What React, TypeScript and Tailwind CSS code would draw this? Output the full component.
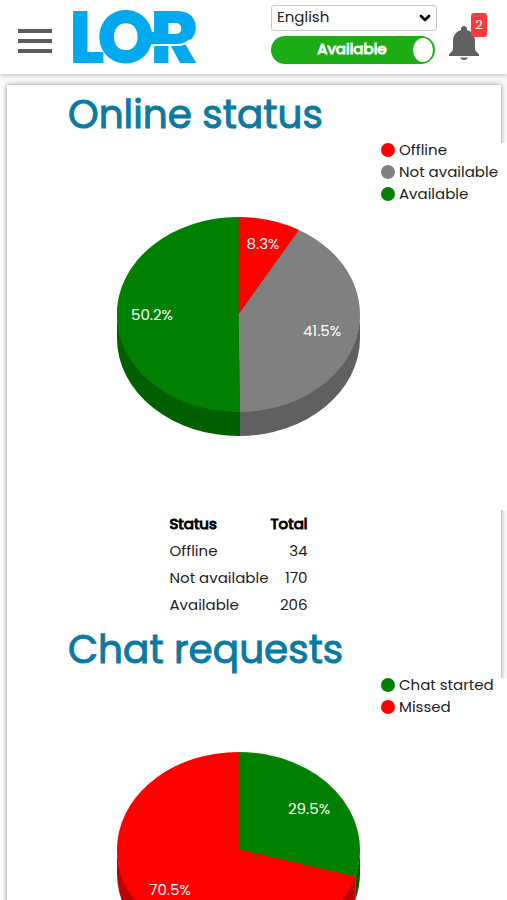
import React, { useState } from 'react';
import { ChevronDown } from 'lucide-react';

interface StatItem {
  label: string;
  share: number;
  fill: string;
  side: string;
  dot: string;
  labelX: number;
  labelY: number;
  total?: number;
}

const ONLINE_STATUS: StatItem[] = [
  { label: 'Offline', share: 8.3, fill: '#ff0000', side: '#bf0000', dot: 'bg-[#ff0000]', labelX: 146, labelY: 32, total: 34 },
  { label: 'Not available', share: 41.5, fill: '#808080', side: '#606060', dot: 'bg-[#808080]', labelX: 205, labelY: 119, total: 170 },
  { label: 'Available', share: 50.2, fill: '#008000', side: '#006000', dot: 'bg-[#008000]', labelX: 35, labelY: 103, total: 206 },
];

const CHAT_REQUESTS: StatItem[] = [
  { label: 'Chat started', share: 29.5, fill: '#008000', side: '#006000', dot: 'bg-[#008000]', labelX: 192, labelY: 62 },
  { label: 'Missed', share: 70.5, fill: '#ff0000', side: '#bf0000', dot: 'bg-[#ff0000]', labelX: 53, labelY: 143 },
];

const CX = 121.5;
const CY = 97.5;
const DEPTH = 24;

// share of the circle, clockwise from the top, to a point on the ellipse
const point = (share: number, dy = 0) => {
  const angle = (share / 100) * Math.PI * 2;
  return `${(CX + CX * Math.sin(angle)).toFixed(2)} ${(CY - CY * Math.cos(angle) + dy).toFixed(2)}`;
};

const Pie3D: React.FC<{ items: StatItem[]; title: string }> = ({ items, title }) => {
  let sum = 0;
  const slices = items.map(item => {
    const start = sum;
    sum += item.share;
    return { ...item, start, end: sum };
  });

  return (
    <svg viewBox="0 0 243 219" className="h-[219px] w-[243px]" role="img" aria-label={title}>
      {slices.map(s => {
        // only the front half of the rim can be seen
        const from = Math.max(s.start, 25);
        const to = Math.min(s.end, 75);
        if (from >= to) return null;
        return (
          <path
            key={s.label}
            fill={s.side}
            d={`M${point(from, -1)} A${CX} ${CY} 0 0 1 ${point(to, -1)} L${point(to, DEPTH)} A${CX} ${CY} 0 0 0 ${point(from, DEPTH)} Z`}
          />
        );
      })}
      {/* backing under the slices, so that no light seam shows between them */}
      <ellipse cx={CX} cy={CY} rx={CX - 1} ry={CY - 1} fill={slices[slices.length - 1].fill} />
      {slices.map(s => (
        <path
          key={s.label}
          fill={s.fill}
          d={`M${CX} ${CY} L${point(s.start)} A${CX} ${CY} 0 ${s.share > 50 ? 1 : 0} 1 ${point(s.end)} Z`}
        />
      ))}
      {slices.map(s => (
        <text key={s.label} x={s.labelX} y={s.labelY} textAnchor="middle" className="fill-white text-[15px]">
          {s.share}%
        </text>
      ))}
    </svg>
  );
};

const StatSection: React.FC<{ title: string; items: StatItem[] }> = ({ title, items }) => (
  <section>
    <h2 className="pt-[2px] pl-[61px] text-[39px] leading-[56px] font-normal text-[#0b7aa3] [-webkit-text-stroke:1px]">{title}</h2>
    <figure className="-mr-[6px] grid h-[367px] grid-cols-[285px_1fr] bg-white pl-[89px]">
      <div className="justify-self-center pt-[74px]">
        <Pie3D items={items} title={title} />
      </div>
      <ul className="flex flex-col gap-2">
        {items.map(item => (
          <li key={item.label} className="flex items-center gap-1 leading-[14px] whitespace-nowrap text-[#222]">
            <span className={`size-[14px] rounded-full ${item.dot}`}></span>
            {item.label}
          </li>
        ))}
      </ul>
    </figure>
    {items.every(item => item.total !== undefined) && (
      <div className="grid grid-cols-[285px] pt-px pb-px pl-[89px]">
        <table className="w-[146px] justify-self-center text-[#222]">
          <thead>
            <tr className="h-[27px] text-black [-webkit-text-stroke:1px]">
              <th className="pl-1 text-left font-normal">Status</th>
              <th className="pr-1 text-right font-normal">Total</th>
            </tr>
          </thead>
          <tbody>
            {items.map(item => (
              <tr key={item.label} className="h-[27px]">
                <td className="pl-1 whitespace-nowrap">{item.label}</td>
                <td className="pr-1 text-right">{item.total}</td>
              </tr>
            ))}
          </tbody>
        </table>
      </div>
    )}
  </section>
);

const Logo: React.FC = () => (
  <svg viewBox="0 0 124 58" className="h-[58px] w-[124px] overflow-visible" role="img" aria-label="LOR">
    <g className="fill-[#00a9ee] font-extrabold" fontSize="73">
      <text x="-4" y="55">L</text>
      <text x="77" y="55">R</text>
      <text x="24" y="55" stroke="#fff" strokeWidth="2" paintOrder="stroke">O</text>
    </g>
    {/* the R joins the O above the line that parts its bowl from its leg */}
    <rect x="77" y="24" width="8" height="12" fill="#00a9ee" />
    <path d="M80 37 H104 Q112 37 117 32" fill="none" stroke="#fff" strokeWidth="2" />
  </svg>
);

const Header: React.FC = () => {
  const [language, setLanguage] = useState('English');
  const [available, setAvailable] = useState(true);

  return (
    <header className="relative flex h-[74px] items-center bg-white pr-7 pl-[18px] shadow-[0_1px_5px_rgba(0,0,0,0.25)]">
      <button type="button" aria-label="Menu" className="mt-2 flex w-[34px] flex-col gap-[6px]">
        <span className="h-1 w-full bg-[#5c5c5c]"></span>
        <span className="h-1 w-full bg-[#5c5c5c]"></span>
        <span className="h-1 w-full bg-[#5c5c5c]"></span>
      </button>
      <a href="#" className="ml-[21px]">
        <Logo />
      </a>
      <div className="ml-auto flex w-[166px] flex-col gap-[5px] pb-[6px]">
        <div className="relative">
          <select
            aria-label="Language"
            value={language}
            onChange={e => setLanguage(e.target.value)}
            className="block h-[26px] w-full appearance-none rounded-[3px] border border-[#c8c8c8] bg-white pl-[5px] text-[#222]"
          >
            <option>English</option>
          </select>
          <ChevronDown className="pointer-events-none absolute top-[5px] right-1 size-4 text-black" strokeWidth={4} />
        </div>
        <button
          type="button"
          role="switch"
          aria-checked={available}
          onClick={() => setAvailable(!available)}
          className="flex h-7 w-[164px] items-center rounded-full bg-[#1cac16] pr-[2px] text-white"
        >
          <span className="flex-1 pl-5 [-webkit-text-stroke:1px]">Available</span>
          <span className="h-6 w-5 rounded-[50%] bg-white"></span>
        </button>
      </div>
      <button type="button" aria-label="Notifications" className="relative ml-3 mt-3">
        <svg viewBox="0 0 30 34" className="h-[34px] w-[30px] fill-[#616161]">
          <path d="M15 0 C16.7 0 18 1.3 18 3 V4 C23 5.5 26 9.5 26 15 V24 L30 28.5 V30 H0 V28.5 L4 24 V15 C4 9.5 7 5.5 12 4 V3 C12 1.3 13.3 0 15 0 Z" />
          <path d="M11.5 31.5 H18.5 Q18 34 15 34 Q12 34 11.5 31.5 Z" />
        </svg>
        <span className="absolute -top-[13px] -right-2 flex h-6 w-4 items-center justify-center rounded-[3px] bg-[#fb3b3b] text-[13px] text-white">2</span>
      </button>
    </header>
  );
};

const App: React.FC = () => (
  <div className="min-h-screen overflow-x-hidden bg-[#fafafa] font-['Poppins','Inter',sans-serif] text-[15px]">
    <Header />
    <main className="mt-[11px] mr-[6px] ml-[7px] bg-white shadow-[0_0_5px_rgba(0,0,0,0.45)]">
      <StatSection title="Online status" items={ONLINE_STATUS} />
      <StatSection title="Chat requests" items={CHAT_REQUESTS} />
    </main>
  </div>
);

export default App;
